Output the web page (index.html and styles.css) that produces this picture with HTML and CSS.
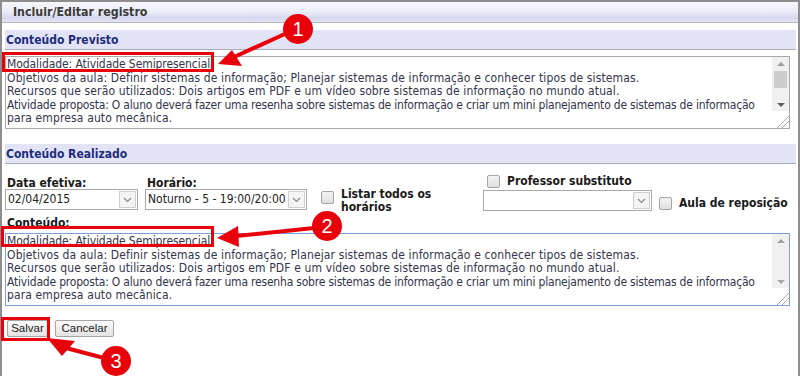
FILE: index.html
```html
<!DOCTYPE html>
<html lang="pt-BR">
  <head>
    <meta charset="UTF-8" />
    <title>Incluir/Editar registro</title>
    <link rel="stylesheet" href="styles.css">
  </head>
  <body>
    <div class="dialog">
      <div class="titlebar">Incluir/Editar registro</div>
      <div class="content">
        <div class="section-head">Conteúdo Previsto</div>
        <div class="memo">
          <div class="memo-text">
            <span class="first">Modalidade: Atividade Semipresencial.</span><br>
            Objetivos da aula: Definir sistemas de informação; Planejar sistemas de informação e conhecer tipos de sistemas.<br>
            Recursos que serão utilizados: Dois artigos em PDF e um vídeo sobre sistemas de informação no mundo atual.<br>
            <span class="tight">Atividade proposta: O aluno deverá fazer uma resenha sobre sistemas de informação e criar um mini planejamento de sistemas de informação</span><br>
            para empresa auto mecânica.
          </div>
          <div class="scrollbar">
            <div class="track">
              <span class="arrow up"></span>
              <span class="thumb"></span>
              <span class="arrow down"></span>
            </div>
            <div class="grip"></div>
          </div>
        </div>

        <div class="section-head second">Conteúdo Realizado</div>
        <div class="form-row">
          <div class="field date">
            <label class="label">Data efetiva:</label>
            <div class="select"><span class="value">02/04/2015</span><span class="drop"></span></div>
          </div>
          <div class="field time">
            <label class="label">Horário:</label>
            <div class="select"><span class="value">Noturno - 5 - 19:00/20:00</span><span class="drop"></span></div>
          </div>
          <div class="check list-all">
            <span class="box"></span>
            <span class="label">Listar todos os<br>horários</span>
          </div>
          <div class="field substitute">
            <div class="check"><span class="box"></span><span class="label">Professor substituto</span></div>
            <div class="sub-row">
              <div class="select"><span class="value"></span><span class="drop"></span></div>
              <div class="check"><span class="box"></span><span class="label">Aula de reposição</span></div>
            </div>
          </div>
        </div>
        <label class="label content-label">Conteúdo:</label>
        <div class="memo focused">
          <div class="memo-text">
            <span class="first">Modalidade: Atividade Semipresencial</span><br>
            Objetivos da aula: Definir sistemas de informação; Planejar sistemas de informação e conhecer tipos de sistemas.<br>
            Recursos que serão utilizados: Dois artigos em PDF e um vídeo sobre sistemas de informação no mundo atual.<br>
            <span class="tight">Atividade proposta: O aluno deverá fazer uma resenha sobre sistemas de informação e criar um mini planejamento de sistemas de informação</span><br>
            para empresa auto mecânica.
          </div>
          <div class="scrollbar">
            <div class="track light">
              <span class="arrow up"></span>
              <span class="arrow down"></span>
            </div>
            <div class="grip"></div>
          </div>
        </div>
        <div class="buttons">
          <button class="btn save">Salvar</button>
          <button class="btn cancel">Cancelar</button>
        </div>
      </div>
    </div>

    <svg class="notes" width="800" height="376" viewBox="0 0 800 376">
      <g fill="none" stroke="#e8000b" stroke-width="3">
        <rect x="3.5" y="53.5" width="209" height="17" />
        <rect x="2.5" y="227.5" width="210" height="18" />
        <rect x="2.5" y="318.5" width="46" height="21" />
      </g>
      <g stroke="#e8000b" stroke-width="4" stroke-linecap="round">
        <line x1="234" y1="57" x2="287" y2="33" />
        <line x1="236" y1="236" x2="314" y2="228" />
        <line x1="66" y1="348" x2="104" y2="358" />
      </g>
      <g fill="#e8000b">
        <polygon points="218,64 232,50 242,66" />
        <polygon points="217,238 238,226 239,247" />
        <polygon points="47,338 75,341 62,356" />
        <circle cx="298" cy="29" r="15" />
        <circle cx="327" cy="226" r="15" />
        <circle cx="116" cy="361" r="15" />
      </g>
      <g fill="#fff" font-family="Liberation Sans, Arial, sans-serif" font-size="20" text-anchor="middle">
        <text x="298" y="36">1</text>
        <text x="327" y="233">2</text>
        <text x="116" y="368">3</text>
      </g>
    </svg>
  </body>
</html>
```

FILE: styles.css
```css
body {
  margin: 0;
  width: 800px;
  height: 376px;
  overflow: hidden;
  position: relative;
  font-family: "DejaVu Sans Condensed", "DejaVu Sans", sans-serif;
  font-size: 12px;
  color: #222;
  background-color: #fff;
}
.dialog {
  height: 376px;
  box-sizing: border-box;
  border: 2px solid #8e8e8e;
  border-bottom: 0;
}
.titlebar {
  height: 20px;
  line-height: 21px;
  padding-left: 11px;
  font-weight: bold;
  font-size: 12.3px;
  color: #3a3a3a;
  background: linear-gradient(#f6f6fb, #eceef8 45%, #d5d8ee 80%, #e4e6f4);
  border-bottom: 1px solid #b4b4bc;
}
.content {
  padding: 7px 2px 0 3px;
}
.section-head {
  height: 19px;
  line-height: 20px;
  padding-left: 1px;
  font-weight: bold;
  color: #222d7e;
  background-color: #e2e4f6;
  border-bottom: 1px solid #ababb8;
}
.section-head.second {
  margin-top: 15px;
}
.memo {
  display: flex;
  height: 71px;
  width: 783px;
  margin-top: 6px;
  border: 1px solid #a9a9a9;
  overflow: hidden;
}
.memo.focused {
  margin-top: 3px;
  border-color: #7d9fd6;
}
.memo-text {
  flex: 1;
  padding: 1px 0 0 1px;
  line-height: 13.5px;
  letter-spacing: 0.13px;
  color: #34344a;
  white-space: nowrap;
  overflow: hidden;
}
.memo-text .first {
  letter-spacing: -0.08px;
}
.memo-text .tight {
  letter-spacing: -0.2px;
}
.scrollbar {
  width: 17px;
  display: flex;
  flex-direction: column;
}
.track {
  flex: 1;
  background-color: #f0f0f0;
  display: flex;
  flex-direction: column;
  align-items: center;
  padding: 5px 0 4px;
}
.arrow {
  width: 0;
  height: 0;
  border-left: 4px solid transparent;
  border-right: 4px solid transparent;
}
.arrow.up {
  border-bottom: 4px solid #a0a0a0;
}
.arrow.down {
  margin-top: auto;
  border-top: 4px solid #606060;
}
.track.light .arrow.down {
  border-top-color: #a8a8a8;
}
.thumb {
  width: 13px;
  height: 17px;
  margin-top: 5px;
  background-color: #cdcdcd;
}
.grip {
  height: 17px;
  background: #fff linear-gradient(135deg, transparent 62%, #aaa 62%, #aaa 66%, transparent 66%, transparent 78%, #aaa 78%, #aaa 82%, transparent 82%);
}
.form-row {
  display: flex;
  align-items: flex-start;
  margin-top: 13px;
  height: 40px;
}
.label {
  display: block;
  font-weight: bold;
  color: #1a1a1a;
  line-height: 13px;
}
.field.date {
  width: 140px;
}
.field.time {
  width: 176px;
}
.select {
  display: flex;
  height: 19px;
  margin-top: -1px;
  border: 1px solid #a9a9a9;
  background-color: #fff;
}
.date .select {
  width: 131px;
}
.time .select {
  width: 160px;
}
.select .value {
  flex: 1;
  padding-left: 2px;
  line-height: 19px;
  font-size: 12px;
  color: #222;
  white-space: nowrap;
  overflow: hidden;
}
.select .drop {
  width: 15px;
  margin: 1px;
  border: 1px solid #cfcfcf;
  background: #f4f4f4 no-repeat center / 9px 6px url("data:image/svg+xml,%3Csvg xmlns='http://www.w3.org/2000/svg' viewBox='0 0 9 6'%3E%3Cpath d='M1 1l3.5 3.5L8 1' fill='none' stroke='%23888' stroke-width='1.2'/%3E%3C/svg%3E");
}
.check {
  display: flex;
  align-items: flex-start;
}
.box {
  width: 11px;
  height: 11px;
  border: 1px solid #a4a4a4;
  border-radius: 2px;
  background: linear-gradient(#f4f4f4, #dedede);
  margin-right: 7px;
  flex-shrink: 0;
}
.list-all {
  margin-top: 14px;
  width: 162px;
}
.list-all .label {
  margin-top: -3px;
}
.field.substitute {
  margin-top: -2px;
}
.substitute > .check {
  margin-left: 4px;
}
.sub-row {
  display: flex;
  align-items: flex-start;
  margin-top: 2px;
}
.substitute .select {
  width: 167px;
  margin-top: 0;
}
.sub-row .check {
  margin: 7px 0 0 7px;
}
.content-label {
  margin-left: 2px;
}
.date .label,
.time .label {
  margin-left: 2px;
}
.buttons {
  display: flex;
  gap: 7px;
  margin-top: 14px;
  margin-left: 2px;
}
.btn {
  font-family: "Liberation Sans", Arial, sans-serif;
  font-size: 11.5px;
  color: #222;
  height: 17px;
  padding: 0;
  line-height: 15px;
  text-align: center;
  border: 1px solid #a5a5a5;
  border-radius: 2px;
  background: linear-gradient(#fafafa, #e3e3e3);
}
.btn.save {
  width: 41px;
}
.btn.cancel {
  width: 59px;
}
.notes {
  position: absolute;
  top: 0;
  left: 0;
  pointer-events: none;
}
```
